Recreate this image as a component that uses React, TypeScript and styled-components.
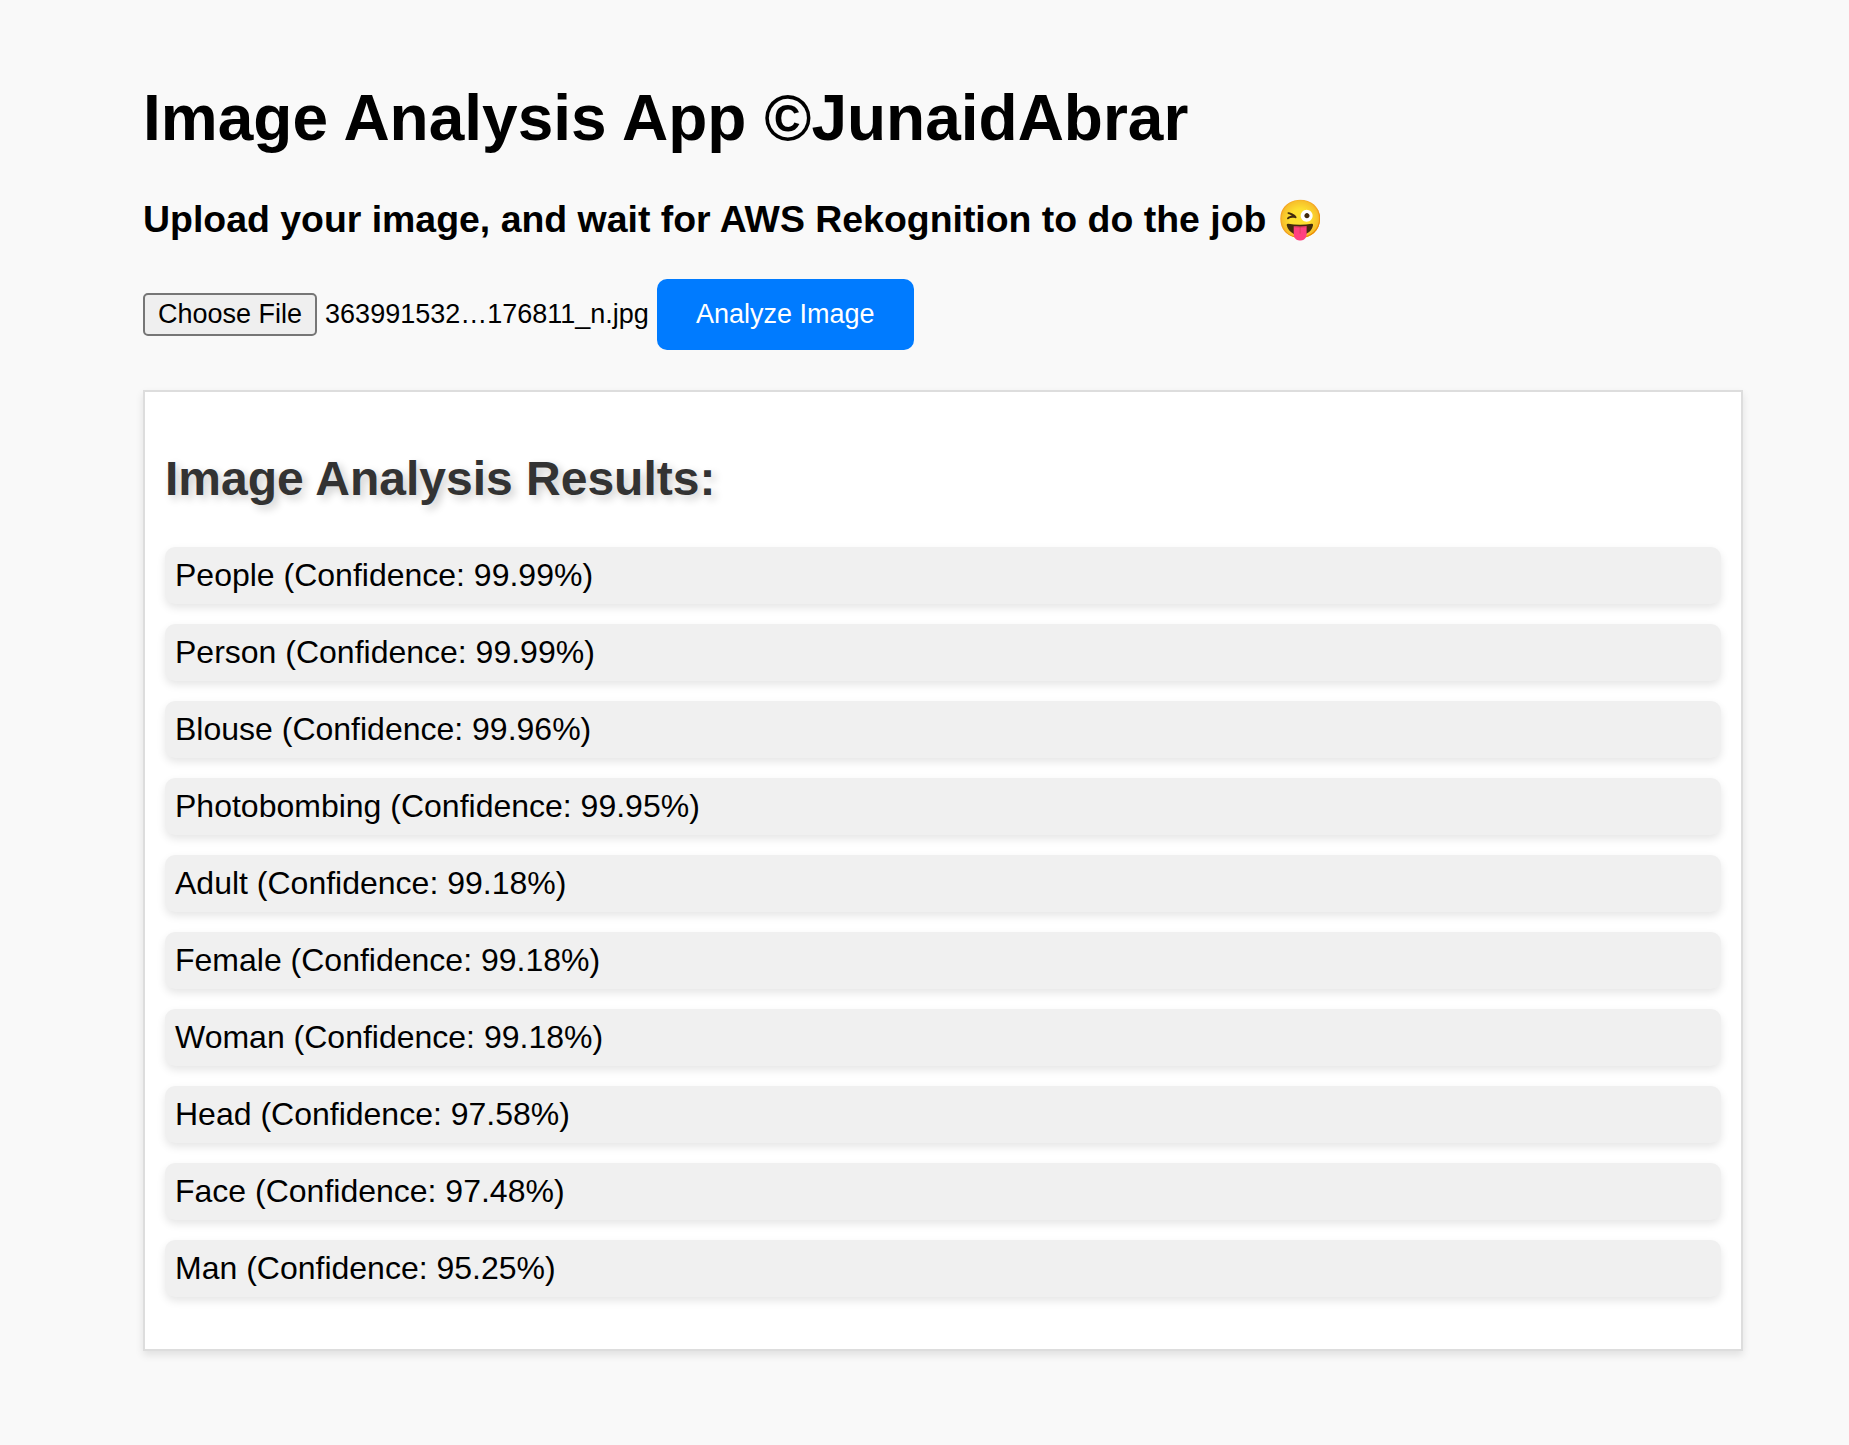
import React, { useState } from "react";
import styled, { createGlobalStyle } from "styled-components";

const GlobalStyle = createGlobalStyle`
  *, *::before, *::after {
    box-sizing: border-box;
  }

  body {
    margin: 0;
    background: #f9f9f9;
    color: #000;
    font-family: "Liberation Sans", Arial, Helvetica, sans-serif;
    font-size: 32px;
    line-height: 37px;
  }
`;

const Page = styled.main`
  padding: 81px 106px 94px 143px;
`;

const Title = styled.h1`
  margin: 0 0 42px;
  font-size: 64px;
  line-height: 74px;
`;

/* Keeps the browser's own h3 size, relative to the body text. */
const Subtitle = styled.h3`
  margin: 0 0 38px;
  line-height: 44px;
`;

const UploadForm = styled.form`
  display: flex;
  flex-wrap: wrap;
  align-items: center;
  gap: 8px;
  margin-bottom: 40px;
  font-size: 27px;
  line-height: 31px;
`;

const FilePicker = styled.label`
  display: flex;
  align-items: center;
  gap: 8px;
  cursor: pointer;
`;

const FileInput = styled.input`
  position: absolute;
  width: 1px;
  height: 1px;
  overflow: hidden;
  clip-path: inset(50%);
  opacity: 0;
`;

const FileButton = styled.span`
  padding: 4px 13px;
  border: 2px solid #767676;
  border-radius: 5px;
  background: #efefef;

  ${FileInput}:focus-visible + & {
    outline: 2px solid #007bff;
  }
`;

const FileName = styled.span`
  white-space: nowrap;
`;

const AnalyzeButton = styled.button`
  padding: 20px 39px;
  border: 0;
  border-radius: 10px;
  background: #007bff;
  color: #fff;
  font: inherit;
  cursor: pointer;
`;

const Results = styled.section`
  padding: 59px 20px 52px;
  border: 2px solid #ddd;
  background: #fff;
  box-shadow: 0 4px 8px rgba(0, 0, 0, 0.1);
`;

const ResultsTitle = styled.h2`
  margin: 0 0 41px;
  color: #333;
  font-size: 48px;
  line-height: 55px;
  text-shadow: 4px 4px 8px rgba(0, 0, 0, 0.2);
`;

const LabelList = styled.ul`
  display: flex;
  flex-direction: column;
  gap: 20px;
  margin: 0;
  padding: 0;
  list-style: none;
`;

const LabelItem = styled.li`
  padding: 10px;
  border-radius: 10px;
  background: #f0f0f0;
  box-shadow: 0 4px 8px rgba(0, 0, 0, 0.1);
`;

interface DetectedLabel {
  name: string;
  confidence: number;
}

const labels: DetectedLabel[] = [
  { name: "People", confidence: 99.99 },
  { name: "Person", confidence: 99.99 },
  { name: "Blouse", confidence: 99.96 },
  { name: "Photobombing", confidence: 99.95 },
  { name: "Adult", confidence: 99.18 },
  { name: "Female", confidence: 99.18 },
  { name: "Woman", confidence: 99.18 },
  { name: "Head", confidence: 97.58 },
  { name: "Face", confidence: 97.48 },
  { name: "Man", confidence: 95.25 },
];

export default function App() {
  const [fileName, setFileName] = useState("363991532…176811_n.jpg");

  const handleFile = (event: React.ChangeEvent<HTMLInputElement>) => {
    const file = event.target.files?.[0];
    if (file) setFileName(file.name);
  };

  return (
    <>
      <GlobalStyle />
      <Page>
        <Title>Image Analysis App ©JunaidAbrar</Title>
        <Subtitle>
          Upload your image, and wait for AWS Rekognition to do the job 😜
        </Subtitle>
        <UploadForm onSubmit={(event) => event.preventDefault()}>
          <FilePicker htmlFor="image-file">
            <FileInput
              id="image-file"
              type="file"
              accept="image/*"
              onChange={handleFile}
            />
            <FileButton>Choose File</FileButton>
            <FileName>{fileName}</FileName>
          </FilePicker>
          <AnalyzeButton type="submit">Analyze Image</AnalyzeButton>
        </UploadForm>
        <Results>
          <ResultsTitle>Image Analysis Results:</ResultsTitle>
          <LabelList>
            {labels.map(({ name, confidence }) => (
              <LabelItem key={name}>
                {`${name} (Confidence: ${confidence.toFixed(2)}%)`}
              </LabelItem>
            ))}
          </LabelList>
        </Results>
      </Page>
    </>
  );
}
